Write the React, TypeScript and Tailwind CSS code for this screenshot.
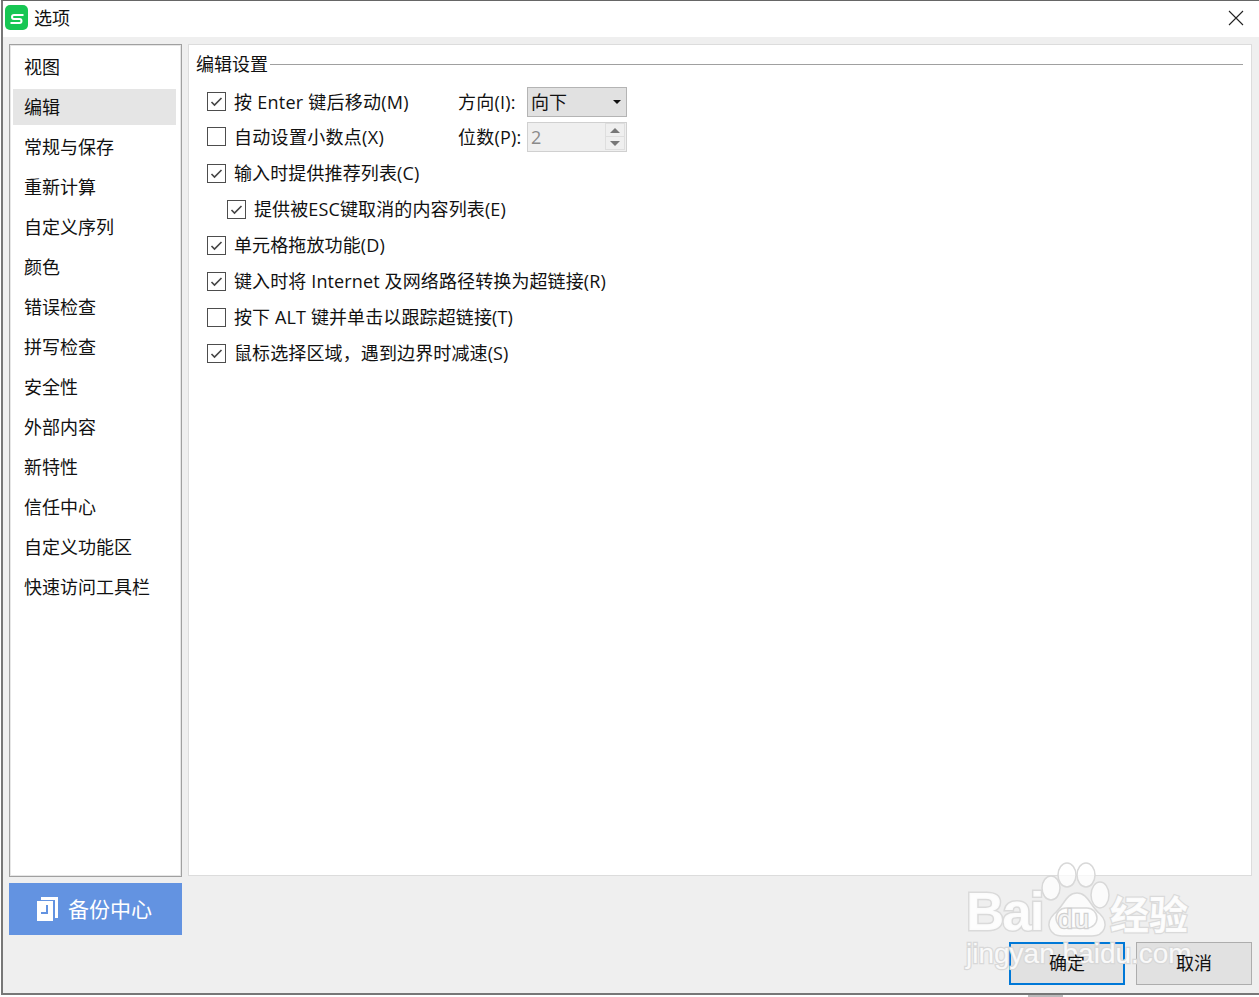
import React from 'react';

const navItems = [
  '视图',
  '编辑',
  '常规与保存',
  '重新计算',
  '自定义序列',
  '颜色',
  '错误检查',
  '拼写检查',
  '安全性',
  '外部内容',
  '新特性',
  '信任中心',
  '自定义功能区',
  '快速访问工具栏',
];

interface OptionRowProps {
  label: string;
  checked?: boolean;
  className?: string;
  labelClassName?: string;
  children?: React.ReactNode;
}

const OptionRow: React.FC<OptionRowProps> = ({ label, checked, className, labelClassName, children }) => {
  return (
    <div className={`flex items-center h-[35px] ${className ?? ''}`}>
      <span className="flex items-center justify-center w-[19px] h-[19px] border border-[#4d4d4d] bg-white shrink-0">
        {checked && (
          <svg width="13" height="11" viewBox="0 0 13 11" fill="none">
            <path d="M1.5 6 L4.5 9 L11.5 2" stroke="#444" strokeWidth="1.6" />
          </svg>
        )}
      </span>
      <span className={`ml-[8px] whitespace-nowrap ${labelClassName ?? 'pb-[2px] tracking-[0.12px]'}`}>{label}</span>
      {children}
    </div>
  );
};

export default function App() {
  return (
    <div className="relative w-[1259px] h-[997px] overflow-hidden bg-white text-[18px] leading-[24px] text-[#111] font-['Open_Sans','Noto_Sans_CJK_SC',sans-serif]">
      <div className="flex flex-col h-[995px] ml-px border-l-2 border-b-2 border-t border-[#777] border-t-[#666] bg-[#efefef]">
        {/* title bar */}
        <div className="flex items-center h-[36px] bg-white shrink-0 pl-[2px] pr-[15px]">
          <svg width="23" height="25" viewBox="0 0 23 25" className="mb-[3px]">
            <rect width="23" height="25" rx="5" fill="#17c653" />
            <path d="M18.5 10H9a2 2 0 0 0 0 4h5.5a2 2 0 0 1 0 4H5.5" stroke="#fff" strokeWidth="2" fill="none" />
          </svg>
          <span className="ml-[6px] pb-[3px]">选项</span>
          <svg className="ml-auto mb-[2px]" width="16" height="16" viewBox="0 0 16 16">
            <path d="M1 1 L15 15 M15 1 L1 15" stroke="#222" strokeWidth="1.1" />
          </svg>
        </div>

        <div className="flex flex-1 min-h-0 pt-[7px] pl-[6px] pr-[7px] gap-[6px]">
          {/* left column */}
          <div className="flex flex-col w-[173px] shrink-0">
            <div className="h-[833px] border border-[#a0a0a0] bg-white p-[2px] shadow-[inset_0_0_0_1px_#e6e6e6]">
              <div className="flex flex-col pl-[1px] pr-[3px]">
                {navItems.map((item, index) => (
                  <div key={index} className="flex items-center h-[40px]">
                    <div className={`flex items-center w-full h-[36px] pl-[11px] ${index === 1 ? 'bg-[#e5e5e5]' : ''}`}>
                      {item}
                    </div>
                  </div>
                ))}
              </div>
            </div>
            <div className="flex items-center h-[52px] mt-[6px] pl-[28px] bg-[#6393e1] text-white text-[21px]">
              <svg width="21" height="24" viewBox="0 0 21 24" className="shrink-0">
                <path d="M4 3V0H21V21H18V3Z" fill="#fff" />
                <path fillRule="evenodd" d="M0 4H16V24H0ZM9 8V15H4V17H11V8Z" fill="#fff" />
              </svg>
              <span className="ml-[10px]">备份中心</span>
            </div>
          </div>

          {/* main panel */}
          <div className="flex flex-col flex-1 self-start h-[832px] border border-[#dcdcdc] bg-white pl-[7px] pr-[8px]">
            <div className="flex items-center h-[38px] mb-[1px]">
              <span className="whitespace-nowrap">编辑设置</span>
              <div className="flex-1 h-px bg-[#a0a0a0] ml-[2px]" />
            </div>
            <div className="flex flex-col pl-[11px]">
              <OptionRow label="按 Enter 键后移动(M)" checked labelClassName="w-[224px] tracking-[0.25px]">
                <span className="w-[69px] whitespace-nowrap tracking-[0.2px]">方向(I):</span>
                <div className="flex items-center justify-between w-[100px] h-[30px] border border-[#b4b4b4] bg-[#e1e1e1] pl-[3px] pr-[5px]">
                  <span>向下</span>
                  <span className="w-0 h-0 border-x-[4px] border-x-transparent border-t-[4px] border-t-[#111]" />
                </div>
              </OptionRow>
              <OptionRow label="自动设置小数点(X)" className="mb-[2px]" labelClassName="w-[224px] tracking-[0.3px]">
                <span className="w-[69px] whitespace-nowrap tracking-[0.2px]">位数(P):</span>
                <div className="flex items-center justify-between w-[100px] h-[30px] border border-[#d0d0d0] bg-[#efefef] pl-[3px] pr-[1px] text-[#8a8a8a]">
                  <span>2</span>
                  <div className="flex flex-col w-[20px] h-[27px] border border-[#dedede]">
                    <span className="flex items-center justify-center flex-1 border-b border-[#dedede]">
                      <span className="w-0 h-0 border-x-[5px] border-x-transparent border-b-[5px] border-b-[#777]" />
                    </span>
                    <span className="flex items-center justify-center flex-1">
                      <span className="w-0 h-0 border-x-[5px] border-x-transparent border-t-[5px] border-t-[#777]" />
                    </span>
                  </div>
                </div>
              </OptionRow>
              <OptionRow label="输入时提供推荐列表(C)" checked className="mb-[1px]" />
              <OptionRow label="提供被ESC键取消的内容列表(E)" checked className="mb-[1px] pl-[20px]" />
              <OptionRow label="单元格拖放功能(D)" checked className="mb-[1px]" />
              <OptionRow label="键入时将 Internet 及网络路径转换为超链接(R)" checked className="mb-[1px]" />
              <OptionRow label="按下 ALT 键并单击以跟踪超链接(T)" className="mb-[1px]" />
              <OptionRow label="鼠标选择区域，遇到边界时减速(S)" checked />
            </div>
          </div>
        </div>

        {/* dialog buttons */}
        <div className="flex justify-end gap-[11px] h-[51px] pr-[7px] shrink-0">
          <button className="w-[116px] h-[43px] pb-[2px] border-2 border-[#0078d7] bg-[#e1e1e1]">
            <span className="relative z-10">确定</span>
          </button>
          <button className="w-[116px] h-[43px] pb-[2px] border border-[#adadad] bg-[#e1e1e1]">
            <span className="relative z-10">取消</span>
          </button>
        </div>
      </div>

      {/* bit of the window behind the dialog */}
      <div className="absolute left-[1028px] top-[995px] w-[35px] h-[2px] bg-[#bbb]" />

      {/* watermark */}
      <div className="absolute left-[966px] top-[862px] w-[240px] h-[115px] pointer-events-none">
        <svg width="70" height="76" viewBox="0 0 70 76" className="absolute left-[74px] top-0" stroke="#d8d8d8" strokeWidth="1.5" fill="#fff" fillOpacity="0.75">
          <ellipse cx="11" cy="26" rx="9" ry="12" />
          <ellipse cx="27" cy="13" rx="9" ry="12" />
          <ellipse cx="46" cy="13" rx="9" ry="12" />
          <ellipse cx="60" cy="33" rx="9" ry="13" />
          <path d="M37 31C26 31 24 44 14 52C4 62 10 74 22 74L52 74C64 74 70 62 60 52C50 44 48 31 37 31Z" />
          <rect x="16" y="46" width="41" height="20" rx="10" />
        </svg>
        <span className="absolute left-0 top-[22px] text-[53px] leading-[56px] tracking-[-2px] font-bold font-['Liberation_Sans',sans-serif] text-white/90 [paint-order:stroke_fill] [-webkit-text-stroke:3px_#dadada]">Bai</span>
        <span className="absolute left-[92px] top-[44px] text-[26px] leading-[26px] tracking-[2px] font-['Liberation_Sans',sans-serif] text-[#f4f4f4] [paint-order:stroke_fill] [-webkit-text-stroke:2.5px_#d0d0d0]">du</span>
        <span className="absolute left-[144px] top-[28px] text-[39px] leading-[44px] font-bold font-['Noto_Sans_CJK_SC',sans-serif] text-white/90 [paint-order:stroke_fill] [-webkit-text-stroke:2.5px_#dadada]">经验</span>
        <span className="absolute left-0 top-[76px] text-[28px] leading-[32px] text-white/85 font-['Liberation_Sans',sans-serif] [paint-order:stroke_fill] [-webkit-text-stroke:2.5px_#d8d8d8]">jingyan.baidu.com</span>
      </div>
    </div>
  );
}
